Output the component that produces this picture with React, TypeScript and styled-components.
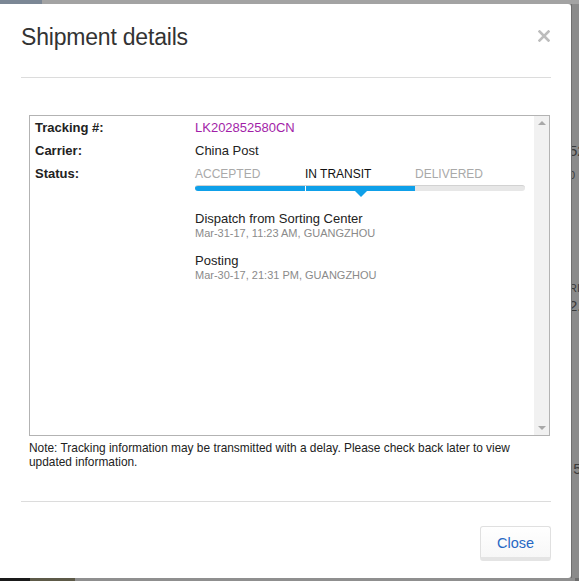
import React from "react";
import styled, { createGlobalStyle } from "styled-components";

const Global = createGlobalStyle`
  html, body { margin: 0; padding: 0; }
  body {
    font-family: "Liberation Sans", Arial, sans-serif;
    background: #8c8c8c;
    overflow: hidden;
  }
`;

const Backdrop = styled.div`
  width: 579px;
  height: 581px;
  display: grid;
  grid-template-columns: 571px 8px;
  grid-template-rows: 4px 574px 3px;
  background: #8c8c8c;
  overflow: hidden;
`;

const TopBand = styled.div`
  grid-column: 1 / 3;
  display: flex;
  background: #a3a3a3;
`;

const TopBandLeft = styled.div`
  width: 42px;
  background: #7b8795;
`;

const SideStrip = styled.div`
  display: flex;
  flex-direction: column;
  background: #8b8b8b;
  border-left: 1px solid #6f6f6f;
  color: #3a3a3a;
  font-size: 15px;
  overflow: hidden;
  white-space: nowrap;
`;

const Glyph = styled.span<{ $top: number; $size?: number }>`
  display: block;
  margin-top: ${(p) => p.$top}px;
  margin-left: -3px;
  font-size: ${(p) => p.$size ?? 15}px;
  line-height: 1;
`;

const BottomStrip = styled.div`
  grid-column: 1 / 3;
  display: flex;
  background: #6d6d6d;
`;

const BottomDark = styled.div<{ $w: number; $c: string }>`
  width: ${(p) => p.$w}px;
  background: ${(p) => p.$c};
`;

const Modal = styled.div`
  background: #fff;
  border-radius: 0 3px 3px 0;
  display: flex;
  flex-direction: column;
  box-sizing: border-box;
  height: 574px;
`;

const Header = styled.div`
  height: 73px;
  box-sizing: border-box;
  padding: 19px 20px 0 21px;
  display: flex;
  justify-content: space-between;
  align-items: flex-start;
`;

const Title = styled.h4`
  margin: 0;
  font-size: 23px;
  letter-spacing: -0.2px;
  line-height: 28px;
  font-weight: normal;
  color: #333;
`;

const CloseX = styled.button`
  border: 0;
  background: none;
  padding: 0;
  margin-top: 6px;
  width: 14px;
  height: 14px;
  display: flex;
  align-items: center;
  justify-content: center;
  cursor: pointer;
`;

const Divider = styled.hr<{ $gap?: number }>`
  margin: ${(p) => p.$gap ?? 0}px 20px 0 21px;
  border: 0;
  height: 1px;
  background: #dcdcdc;
`;

const Body = styled.div`
  padding: 37px 21px 0 29px;
`;

const TrackBox = styled.div`
  height: 321px;
  box-sizing: border-box;
  border: 1px solid #b3b3b3;
  display: flex;
`;

const TrackContent = styled.div`
  flex: 1;
  padding: 0 0 0 5px;
`;

const Scrollbar = styled.div`
  width: 15px;
  background: #f1f1f1;
  display: flex;
  flex-direction: column;
  justify-content: space-between;
  align-items: center;
  padding: 5px 0 5px;
`;

const Arrow = styled.span<{ $down?: boolean }>`
  width: 0;
  height: 0;
  border-left: 4px solid transparent;
  border-right: 4px solid transparent;
  ${(p) =>
    p.$down
      ? "border-top: 4px solid #a8a8a8;"
      : "border-bottom: 4px solid #a8a8a8;"}
`;

const InfoGrid = styled.div`
  display: grid;
  grid-template-columns: 160px 1fr;
  grid-auto-rows: auto;
`;

const Label = styled.div`
  font-size: 13px;
  font-weight: bold;
  line-height: 23px;
  color: #222;
`;

const Value = styled.div<{ $accent?: boolean }>`
  font-size: 13px;
  line-height: 23px;
  color: ${(p) => (p.$accent ? "#a21ea8" : "#222")};
`;

const StatusCell = styled.div`
  display: flex;
  flex-direction: column;
`;

const Steps = styled.div`
  display: grid;
  grid-template-columns: repeat(3, 110px);
  width: 330px;
`;

const StepLabel = styled.div<{ $active?: boolean }>`
  font-size: 12px;
  line-height: 23px;
  padding-top: 1px;
  margin-bottom: -1px;
  color: ${(p) => (p.$active ? "#111" : "#a9a9a9")};
`;

const Bar = styled.div`
  width: 330px;
  height: 6px;
  box-sizing: border-box;
  border-radius: 3px;
  background: #e7e7e7;
  border-top: 1px solid #d2d2d2;
  display: flex;
  overflow: hidden;
`;

const BarFill = styled.div<{ $first?: boolean }>`
  width: 110px;
  margin-top: -1px;
  height: 6px;
  background: #0fa0e9;
  border-left: ${(p) => (p.$first ? "0" : "1px solid #fff")};
  box-sizing: border-box;
`;

const PointerRow = styled.div`
  display: grid;
  grid-template-columns: repeat(3, 110px);
  width: 330px;
  height: 6px;
`;

const Pointer = styled.span`
  grid-column: 2;
  justify-self: center;
  width: 0;
  height: 0;
  margin-left: 1px;
  border-left: 6px solid transparent;
  border-right: 6px solid transparent;
  border-top: 6px solid #0fa0e9;
`;

const Events = styled.div`
  display: flex;
  flex-direction: column;
  gap: 14px;
  padding-top: 14px;
`;

const Event = styled.div`
  display: flex;
  flex-direction: column;
`;

const EventTitle = styled.div`
  font-size: 13px;
  line-height: 16px;
  color: #222;
`;

const EventMeta = styled.div`
  font-size: 11px;
  line-height: 12px;
  color: #8a8a8a;
`;

const Note = styled.p`
  margin: 5px 0 0;
  font-size: 11.9px;
  line-height: 14px;
  color: #222;
`;

const Footer = styled.div`
  padding: 24px 20px 0 21px;
  display: flex;
  justify-content: flex-end;
`;

const Button = styled.button`
  font-family: "Liberation Sans", Arial, sans-serif;
  font-size: 14.5px;
  color: #2768c4;
  width: 71px;
  height: 35px;
  box-sizing: border-box;
  border: 1px solid #e0e0e0;
  border-bottom: 4px solid #e4e4e4;
  border-radius: 3px;
  background: linear-gradient(#ffffff, #f7f7f7);
  padding: 2px 0 0;
  cursor: pointer;
`;

const steps = [
  { label: "ACCEPTED", active: false },
  { label: "IN TRANSIT", active: true },
  { label: "DELIVERED", active: false },
];

const events = [
  {
    title: "Dispatch from Sorting Center",
    meta: "Mar-31-17, 11:23 AM, GUANGZHOU",
  },
  { title: "Posting", meta: "Mar-30-17, 21:31 PM, GUANGZHOU" },
];

export default function App() {
  return (
    <>
      <Global />
      <Backdrop>
        <TopBand>
          <TopBandLeft />
        </TopBand>
        <Modal>
          <Header>
            <Title>Shipment details</Title>
            <CloseX aria-label="Close">
              <svg width="12" height="12" viewBox="0 0 12 12">
                <path
                  d="M1.5 1.5 L10.5 10.5 M10.5 1.5 L1.5 10.5"
                  stroke="#bdbdbd"
                  strokeWidth="2.6"
                  strokeLinecap="square"
                />
              </svg>
            </CloseX>
          </Header>
          <Divider />
          <Body>
            <TrackBox>
              <TrackContent>
                <InfoGrid>
                  <Label>Tracking #:</Label>
                  <Value $accent>LK202852580CN</Value>
                  <Label>Carrier:</Label>
                  <Value>China Post</Value>
                  <Label>Status:</Label>
                  <StatusCell>
                    <Steps>
                      {steps.map((s) => (
                        <StepLabel key={s.label} $active={s.active}>
                          {s.label}
                        </StepLabel>
                      ))}
                    </Steps>
                    <Bar>
                      <BarFill $first />
                      <BarFill />
                    </Bar>
                    <PointerRow>
                      <Pointer />
                    </PointerRow>
                    <Events>
                      {events.map((e) => (
                        <Event key={e.title}>
                          <EventTitle>{e.title}</EventTitle>
                          <EventMeta>{e.meta}</EventMeta>
                        </Event>
                      ))}
                    </Events>
                  </StatusCell>
                </InfoGrid>
              </TrackContent>
              <Scrollbar>
                <Arrow />
                <Arrow $down />
              </Scrollbar>
            </TrackBox>
            <Note>
              Note: Tracking information may be transmitted with a delay. Please
              check back later to view updated information.
            </Note>
          </Body>
          <Divider $gap={32} />
          <Footer>
            <Button>Close</Button>
          </Footer>
        </Modal>
        <SideStrip>
          <Glyph $top={139}>52</Glyph>
          <Glyph $top={12} $size={11}>0</Glyph>
          <Glyph $top={102} $size={11}>RI</Glyph>
          <Glyph $top={4}>2.</Glyph>
          <Glyph $top={148}>.5</Glyph>
        </SideStrip>
        <BottomStrip>
          <BottomDark $w={30} $c="#1a1a1a" />
          <BottomDark $w={45} $c="#5d5a48" />
          <BottomDark $w={500} $c="#8f8f8f" />
        </BottomStrip>
      </Backdrop>
    </>
  );
}
